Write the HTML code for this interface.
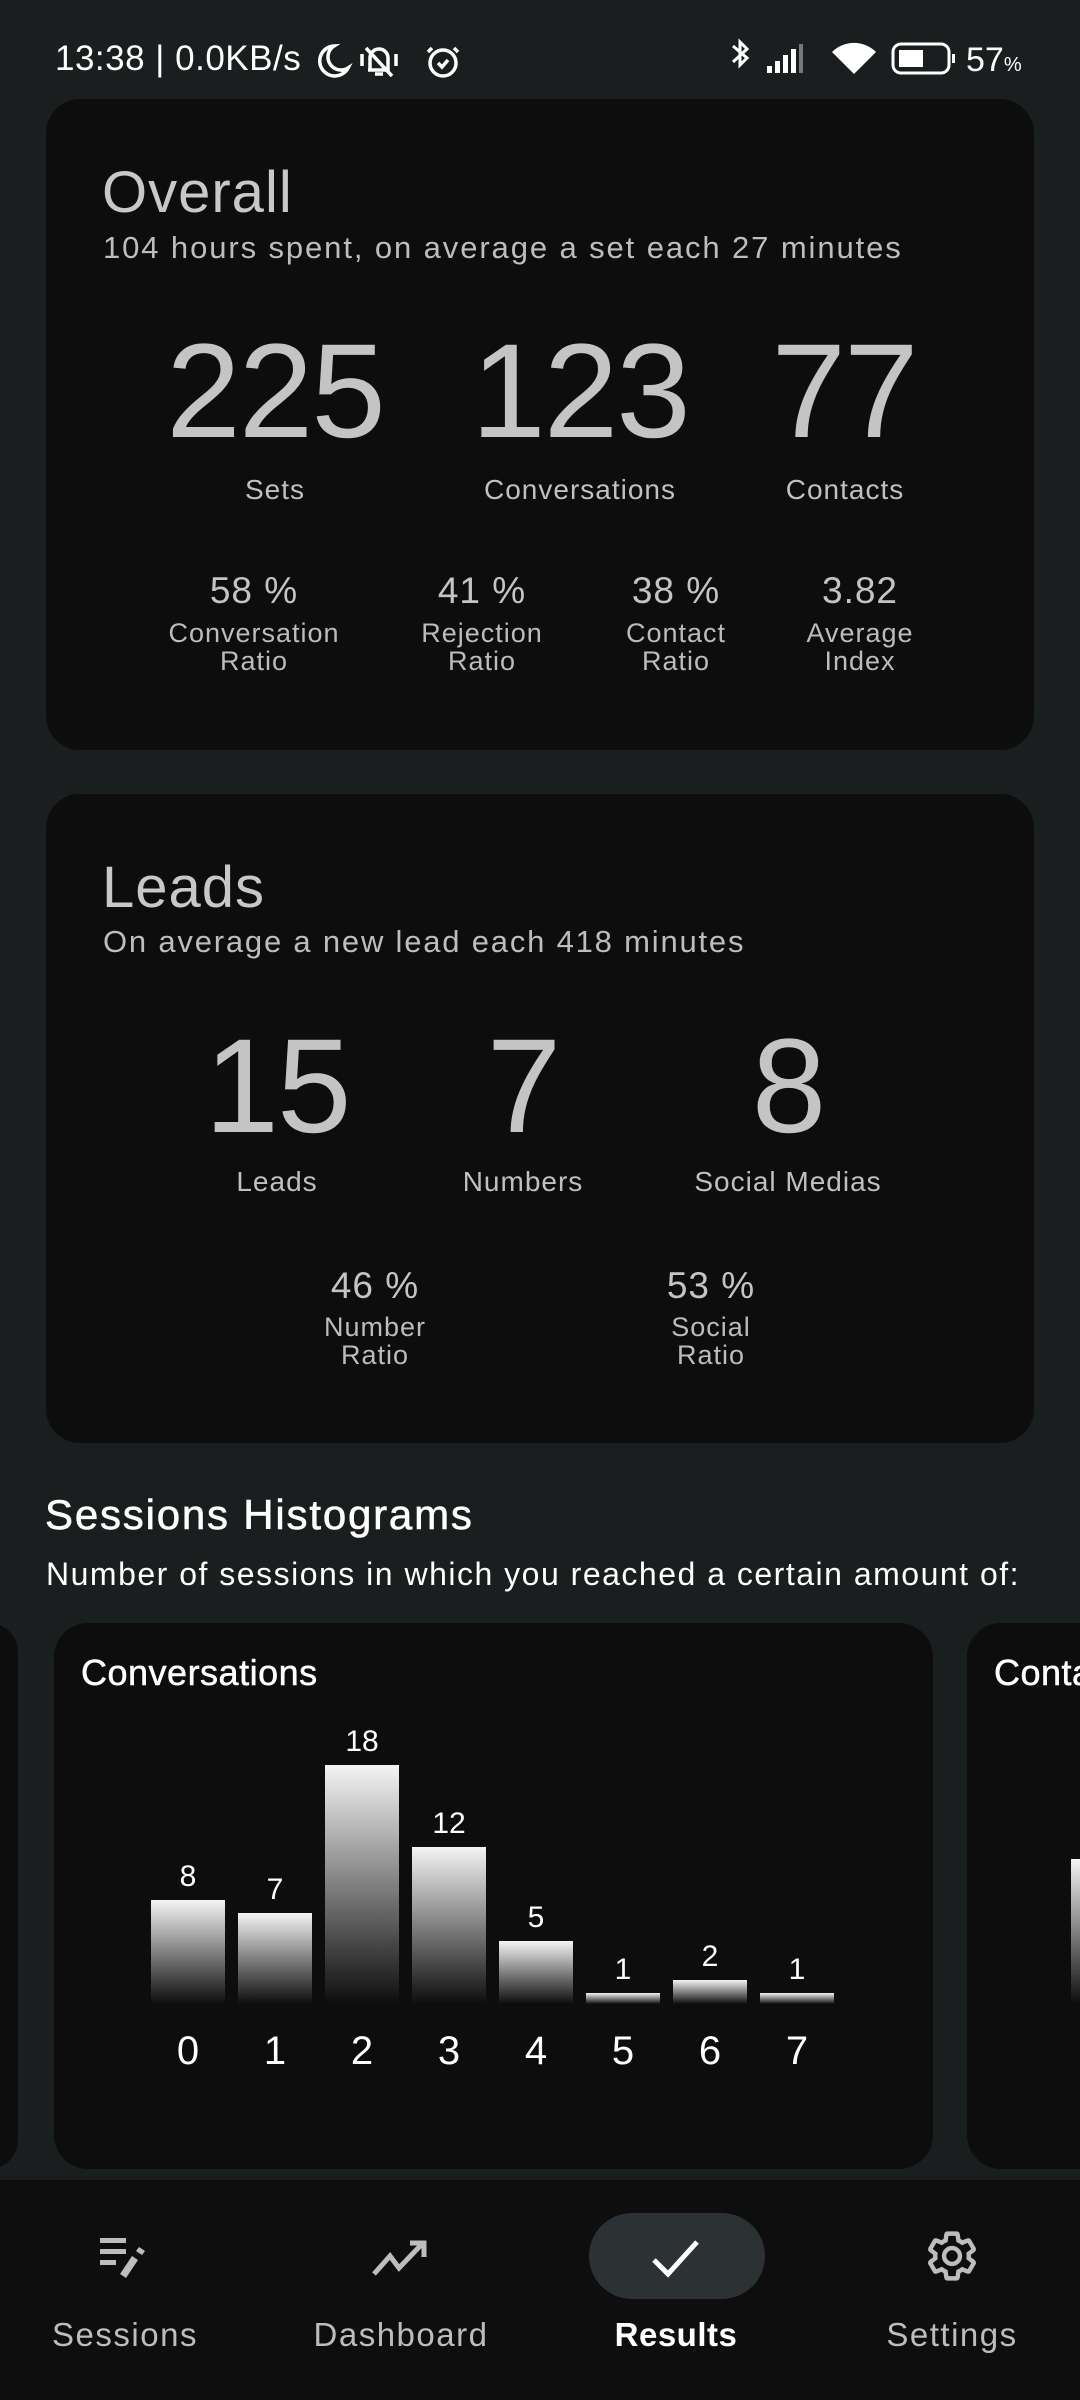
<!DOCTYPE html>
<html><head><meta charset="utf-8"><style>
*{margin:0;padding:0;box-sizing:border-box}
body{width:1080px;height:2400px;background:#1b1e1f;font-family:"Liberation Sans",sans-serif;position:relative;overflow:hidden;color:#c6c6c6}
.a{position:absolute;white-space:nowrap}
.c{position:absolute;white-space:nowrap;transform:translateX(-50%);text-align:center}
.card{position:absolute;background:#0d0d0d;border-radius:34px}
.big{font-size:134px;line-height:134px;color:#c4c4c4;letter-spacing:-2px}
.lbl{font-size:28px;line-height:30px;color:#c0c0c0;letter-spacing:1px}
.pct{font-size:37px;line-height:40px;color:#c4c4c4;letter-spacing:1px}
.sl{font-size:27px;line-height:28px;color:#bcbcbc;letter-spacing:1px}
.bar{position:absolute;width:74px;background:linear-gradient(#f4f4f4,#0d0d0d)}
.bv{position:absolute;width:74px;text-align:center;font-size:30px;line-height:30px;color:#fff}
.bx{position:absolute;width:74px;text-align:center;font-size:40px;line-height:40px;color:#fff}
.nav{font-size:33px;line-height:34px;color:#bdbdbd;letter-spacing:1.5px}
</style></head><body>
<!-- status bar -->
<div class="a" style="left:55px;top:41px;font-size:35px;line-height:36px;color:#fff;letter-spacing:0.5px">13:38 | 0.0KB/s</div>
<svg class="a" style="left:312px;top:40px" width="150" height="42" viewBox="0 0 150 42" fill="none" stroke="#fff" stroke-width="3.5">
<path d="M22 6 A15 15 0 1 0 36 28 A13 13 0 0 1 22 6Z"/>
<path d="M58 30 V18 a9 9 0 0 1 18 0 V30 H56 M63 34 h8 M54 8 L80 36 M50 14 v12 M84 14 v12"/>
<circle cx="131" cy="23" r="13"/><path d="M126 23 l4 4 6-7 M120 8 l-4 4 M142 8 l4 4"/>
</svg>
<svg class="a" style="left:725px;top:38px" width="245" height="46" viewBox="0 0 245 46">
<path d="M8 8 L22 20 L15 27 V4 L22 11 L8 24" stroke="#fff" stroke-width="3" fill="none"/>
<rect x="42" y="28" width="5" height="7" fill="#fff"/><rect x="50" y="23" width="5" height="12" fill="#fff"/><rect x="58" y="17" width="5" height="18" fill="#fff"/><rect x="66" y="11" width="5" height="24" fill="#fff"/><rect x="74" y="6" width="4" height="29" fill="#777"/>
<path d="M129 36 L107 14 A31 31 0 0 1 151 14 Z" fill="#fff"/>
<rect x="168" y="6" width="56" height="29" rx="8" stroke="#fff" stroke-width="3" fill="none"/><rect x="174" y="12" width="24" height="17" fill="#fff"/><rect x="227" y="16" width="3" height="9" fill="#fff"/>
</svg>
<div class="a" style="left:966px;top:42px;font-size:34px;line-height:36px;color:#fff">57<span style="font-size:20px">%</span></div>

<!-- Overall card -->
<div class="card" style="left:46px;top:99px;width:988px;height:651px"></div>
<div class="a" style="left:102px;top:160px;font-size:58px;line-height:66px;color:#c8c8c8;letter-spacing:1px">Overall</div>
<div class="a" style="left:103px;top:230px;font-size:31px;line-height:36px;color:#bdbdbd;letter-spacing:1.9px">104 hours spent, on average a set each 27 minutes</div>
<div class="c big" style="left:275px;top:325px">225</div>
<div class="c big" style="left:580px;top:325px">123</div>
<div class="c big" style="left:844px;top:325px">77</div>
<div class="c lbl" style="left:275px;top:475px">Sets</div>
<div class="c lbl" style="left:580px;top:475px">Conversations</div>
<div class="c lbl" style="left:845px;top:475px">Contacts</div>
<div class="c pct" style="left:254px;top:571px">58 %</div>
<div class="c pct" style="left:482px;top:571px">41 %</div>
<div class="c pct" style="left:676px;top:571px">38 %</div>
<div class="c pct" style="left:860px;top:571px">3.82</div>
<div class="c sl" style="left:254px;top:619px">Conversation<br>Ratio</div>
<div class="c sl" style="left:482px;top:619px">Rejection<br>Ratio</div>
<div class="c sl" style="left:676px;top:619px">Contact<br>Ratio</div>
<div class="c sl" style="left:860px;top:619px">Average<br>Index</div>

<!-- Leads card -->
<div class="card" style="left:46px;top:794px;width:988px;height:649px"></div>
<div class="a" style="left:102px;top:855px;font-size:58px;line-height:66px;color:#c8c8c8;letter-spacing:1px">Leads</div>
<div class="a" style="left:103px;top:924px;font-size:31px;line-height:36px;color:#bdbdbd;letter-spacing:1.8px">On average a new lead each 418 minutes</div>
<div class="c big" style="left:277px;top:1020px">15</div>
<div class="c big" style="left:523px;top:1020px">7</div>
<div class="c big" style="left:788px;top:1020px">8</div>
<div class="c lbl" style="left:277px;top:1167px">Leads</div>
<div class="c lbl" style="left:523px;top:1167px">Numbers</div>
<div class="c lbl" style="left:788px;top:1167px">Social Medias</div>
<div class="c pct" style="left:375px;top:1266px">46 %</div>
<div class="c pct" style="left:711px;top:1266px">53 %</div>
<div class="c sl" style="left:375px;top:1313px">Number<br>Ratio</div>
<div class="c sl" style="left:711px;top:1313px">Social<br>Ratio</div>

<!-- Histograms -->
<div class="a" style="left:45px;top:1492px;font-size:42px;line-height:46px;color:#fff;letter-spacing:1.8px;-webkit-text-stroke:0.6px #fff">Sessions Histograms</div>
<div class="a" style="left:46px;top:1556px;font-size:32px;line-height:36px;color:#fff;letter-spacing:1.5px">Number of sessions in which you reached a certain amount of:</div>
<div class="card" style="left:-40px;top:1623px;width:58px;height:546px"></div>
<div class="card" style="left:54px;top:1623px;width:879px;height:546px"></div>
<div class="card" style="left:967px;top:1623px;width:200px;height:546px"></div>
<div class="a" style="left:81px;top:1653px;font-size:36px;line-height:40px;color:#fff;letter-spacing:0.5px;-webkit-text-stroke:0.5px #fff">Conversations</div>
<div class="a" style="left:994px;top:1653px;font-size:36px;line-height:40px;color:#fff;letter-spacing:0.5px;-webkit-text-stroke:0.5px #fff">Conta</div>
<div class="bar" style="left:1071px;top:1859px;height:145px"></div>

<div class="bar" style="left:151px;top:1900px;height:104px"></div>
<div class="bar" style="left:238px;top:1913px;height:91px"></div>
<div class="bar" style="left:325px;top:1765px;height:239px"></div>
<div class="bar" style="left:412px;top:1847px;height:157px"></div>
<div class="bar" style="left:499px;top:1941px;height:63px"></div>
<div class="bar" style="left:586px;top:1993px;height:11px"></div>
<div class="bar" style="left:673px;top:1980px;height:24px"></div>
<div class="bar" style="left:760px;top:1993px;height:11px"></div>

<div class="bv" style="left:151px;top:1862px">8</div>
<div class="bv" style="left:238px;top:1875px">7</div>
<div class="bv" style="left:325px;top:1727px">18</div>
<div class="bv" style="left:412px;top:1809px">12</div>
<div class="bv" style="left:499px;top:1903px">5</div>
<div class="bv" style="left:586px;top:1955px">1</div>
<div class="bv" style="left:673px;top:1942px">2</div>
<div class="bv" style="left:760px;top:1955px">1</div>

<div class="bx" style="left:151px;top:2031px">0</div>
<div class="bx" style="left:238px;top:2031px">1</div>
<div class="bx" style="left:325px;top:2031px">2</div>
<div class="bx" style="left:412px;top:2031px">3</div>
<div class="bx" style="left:499px;top:2031px">4</div>
<div class="bx" style="left:586px;top:2031px">5</div>
<div class="bx" style="left:673px;top:2031px">6</div>
<div class="bx" style="left:760px;top:2031px">7</div>

<!-- nav -->
<div class="a" style="left:0;top:2180px;width:1080px;height:220px;background:#0e0e0e"></div>
<div class="a" style="left:589px;top:2213px;width:176px;height:86px;border-radius:43px;background:#2c3133"></div>
<svg class="a" style="left:100px;top:2236px" width="52" height="44" viewBox="0 0 52 44" fill="#bdbdbd">
<rect x="0" y="2" width="26" height="5"/><rect x="0" y="13" width="26" height="5"/><rect x="0" y="24" width="16" height="5"/>
<path d="M32 20 l6 4 -12 18 -6 -4z M36 15 l3-4 6 4 -3 4z"/>
</svg>
<svg class="a" style="left:372px;top:2238px" width="58" height="40" viewBox="0 0 58 40" fill="none" stroke="#bdbdbd" stroke-width="5">
<path d="M2 36 L18 18 L27 30 L50 6 M38 5 H52 V19"/>
</svg>
<svg class="a" style="left:651px;top:2238px" width="50" height="40" viewBox="0 0 50 40" fill="none" stroke="#fff" stroke-width="5">
<path d="M3 22 L17 36 L46 4"/>
</svg>
<svg class="a" style="left:924px;top:2228px" width="56" height="56" viewBox="0 0 24 24" fill="none" stroke="#bdbdbd" stroke-width="1.9">
<path d="M19.14,12.94c0.04-0.3,0.06-0.61,0.06-0.94c0-0.32-0.02-0.64-0.07-0.94l2.03-1.58c0.18-0.14,0.23-0.41,0.12-0.61l-1.92-3.32c-0.12-0.22-0.37-0.29-0.59-0.22l-2.39,0.96c-0.5-0.38-1.03-0.7-1.62-0.94L14.4,2.81c-0.04-0.24-0.24-0.41-0.48-0.41h-3.84c-0.24,0-0.43,0.17-0.47,0.41L9.25,5.35C8.66,5.59,8.12,5.92,7.63,6.29L5.24,5.33c-0.22-0.08-0.47,0-0.59,0.22L2.74,8.87C2.62,9.08,2.66,9.34,2.86,9.48l2.03,1.58C4.84,11.36,4.8,11.69,4.8,12s0.02,0.64,0.07,0.94l-2.03,1.58c-0.18,0.14-0.23,0.41-0.12,0.61l1.92,3.32c0.12,0.22,0.37,0.29,0.59,0.22l2.39-0.96c0.5,0.38,1.03,0.7,1.62,0.94l0.36,2.54c0.05,0.24,0.24,0.41,0.48,0.41h3.84c0.24,0,0.44-0.17,0.47-0.41l0.36-2.54c0.59-0.24,1.130-0.56,1.62-0.94l2.39,0.96c0.22,0.08,0.47,0,0.59-0.22l1.92-3.32c0.12-0.22,0.07-0.47-0.12-0.61L19.14,12.94z"/>
<circle cx="12" cy="12" r="3.4"/>
</svg>
<div class="c nav" style="left:125px;top:2318px">Sessions</div>
<div class="c nav" style="left:401px;top:2318px">Dashboard</div>
<div class="c nav" style="left:676px;top:2318px;color:#fff;font-weight:bold;letter-spacing:0.5px">Results</div>
<div class="c nav" style="left:952px;top:2318px">Settings</div>
</body></html>
